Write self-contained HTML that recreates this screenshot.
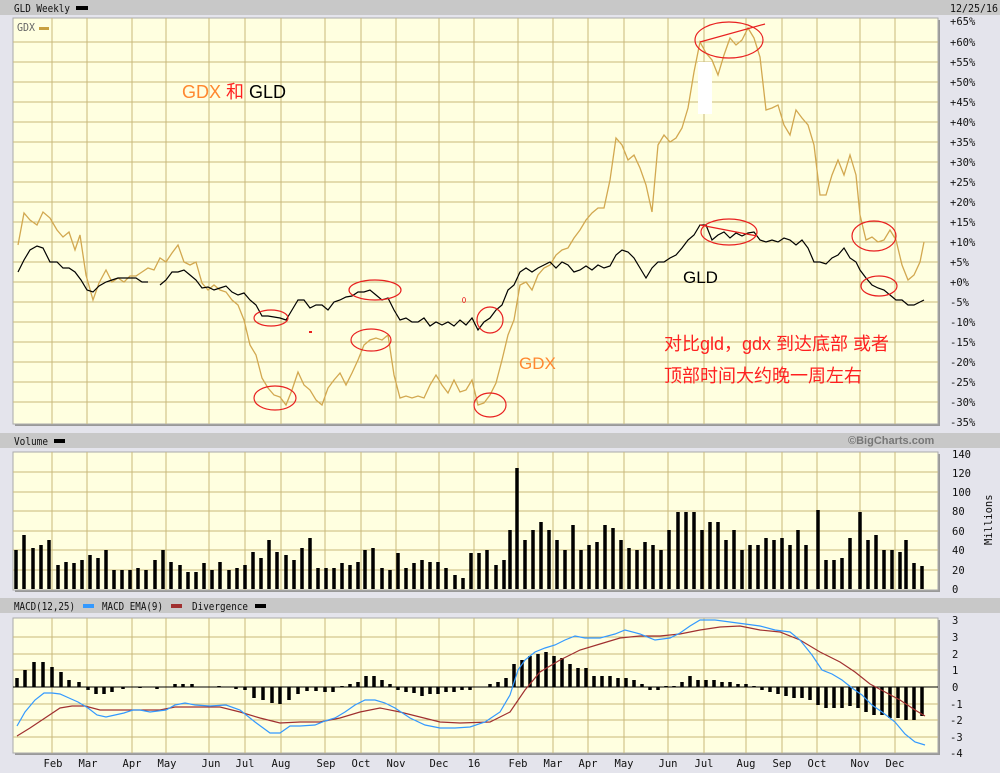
<!DOCTYPE html>
<html><head><meta charset="utf-8"><style>
html,body{margin:0;padding:0;background:#e4e4ec;}
svg{display:block}
.t{font-family:"DejaVu Sans Mono","Liberation Mono",monospace;font-size:10.5px;fill:#111}
.c{font-family:"Liberation Sans","Noto Sans CJK SC",sans-serif;font-size:17px}
</style></head><body>
<svg width="1000" height="773" viewBox="0 0 1000 773" xmlns="http://www.w3.org/2000/svg">
<rect width="1000" height="773" fill="#e4e4ec"/>
<rect x="0" y="0" width="1000" height="15" fill="#c8c8c8"/>
<rect x="0" y="433" width="1000" height="15" fill="#c8c8c8"/>
<rect x="0" y="598" width="1000" height="15" fill="#c8c8c8"/>
<text class="t" x="14" y="12" textLength="56" lengthAdjust="spacingAndGlyphs">GLD Weekly</text><rect x="76" y="6" width="12" height="4" fill="#000"/>
<text class="t" x="950" y="12" textLength="48" lengthAdjust="spacingAndGlyphs">12/25/16</text>
<text class="t" x="14" y="445" textLength="34" lengthAdjust="spacingAndGlyphs">Volume</text><rect x="54" y="439" width="11" height="4" fill="#000"/>
<text x="848" y="444" style="font-family:'Liberation Sans',sans-serif;font-size:11px;font-weight:bold;fill:#777">©BigCharts.com</text>
<text class="t" x="14" y="610" textLength="61" lengthAdjust="spacingAndGlyphs">MACD(12,25)</text><rect x="83" y="604" width="11" height="4" fill="#3399ff"/>
<text class="t" x="102" y="610" textLength="61" lengthAdjust="spacingAndGlyphs">MACD EMA(9)</text><rect x="171" y="604" width="11" height="4" fill="#a03030"/>
<text class="t" x="192" y="610" textLength="56" lengthAdjust="spacingAndGlyphs">Divergence</text><rect x="255" y="604" width="11" height="4" fill="#000"/>
<rect x="15" y="20" width="925" height="406" fill="#999"/>
<rect x="13" y="18" width="925" height="406" fill="#ffffe0" stroke="#aaa"/>
<rect x="15" y="454" width="925" height="138" fill="#999"/>
<rect x="13" y="452" width="925" height="138" fill="#ffffe0" stroke="#aaa"/>
<rect x="15" y="620" width="925" height="135" fill="#999"/>
<rect x="13" y="618" width="925" height="135" fill="#ffffe0" stroke="#aaa"/>
<g stroke="#c9b97a" stroke-width="1">
<path d="M13 42H938M13 62H938M13 82H938M13 102H938M13 122H938M13 142H938M13 162H938M13 182H938M13 202H938M13 222H938M13 242H938M13 262H938M13 282H938M13 302H938M13 322H938M13 342H938M13 362H938M13 382H938M13 402H938"/>
<path d="M13 472H938M13 492H938M13 511H938M13 531H938M13 550H938M13 570H938"/>
<path d="M13 637H938M13 654H938M13 670H938M13 687H938M13 704H938M13 720H938M13 737H938"/>
<path d="M52 18V424M87 18V424M132 18V424M166 18V424M209 18V424M245 18V424M281 18V424M325 18V424M361 18V424M396 18V424M439 18V424M474 18V424M518 18V424M553 18V424M588 18V424M624 18V424M668 18V424M704 18V424M746 18V424M782 18V424M817 18V424M860 18V424M895 18V424"/>
<path d="M52 452V590M87 452V590M132 452V590M166 452V590M209 452V590M245 452V590M281 452V590M325 452V590M361 452V590M396 452V590M439 452V590M474 452V590M518 452V590M553 452V590M588 452V590M624 452V590M668 452V590M704 452V590M746 452V590M782 452V590M817 452V590M860 452V590M895 452V590"/>
<path d="M52 618V753M87 618V753M132 618V753M166 618V753M209 618V753M245 618V753M281 618V753M325 618V753M361 618V753M396 618V753M439 618V753M474 618V753M518 618V753M553 618V753M588 618V753M624 618V753M668 618V753M704 618V753M746 618V753M782 618V753M817 618V753M860 618V753M895 618V753"/>
</g>
<text class="t" x="17" y="31" style="fill:#666" textLength="18" lengthAdjust="spacingAndGlyphs">GDX</text><rect x="39" y="27" width="10" height="3" fill="#c8a040"/>
<g class="t" style="font-size:10.5px">
<text x="950" y="25">+65%</text><text x="950" y="46">+60%</text><text x="950" y="66">+55%</text><text x="950" y="86">+50%</text><text x="950" y="106">+45%</text><text x="950" y="126">+40%</text><text x="950" y="146">+35%</text><text x="950" y="166">+30%</text><text x="950" y="186">+25%</text><text x="950" y="206">+20%</text><text x="950" y="226">+15%</text><text x="950" y="246">+10%</text><text x="950" y="266">+5%</text><text x="950" y="286">+0%</text><text x="950" y="306">-5%</text><text x="950" y="326">-10%</text><text x="950" y="346">-15%</text><text x="950" y="366">-20%</text><text x="950" y="386">-25%</text><text x="950" y="406">-30%</text><text x="950" y="426">-35%</text>
<text x="952" y="458">140</text><text x="952" y="477">120</text><text x="952" y="496">100</text><text x="952" y="515">80</text><text x="952" y="535">60</text><text x="952" y="554">40</text><text x="952" y="574">20</text><text x="952" y="593">0</text>
<text x="952" y="624">3</text><text x="952" y="641">3</text><text x="952" y="658">2</text><text x="952" y="674">1</text><text x="952" y="691">0</text><text x="950" y="708">-1</text><text x="950" y="724">-2</text><text x="950" y="741">-3</text><text x="950" y="757">-4</text>
</g>
<text class="t" transform="translate(992,545) rotate(-90)">Millions</text>
<g class="t" text-anchor="middle" style="font-size:10.5px">
<text x="53" y="767">Feb</text><text x="88" y="767">Mar</text><text x="132" y="767">Apr</text><text x="167" y="767">May</text><text x="211" y="767">Jun</text><text x="245" y="767">Jul</text><text x="281" y="767">Aug</text><text x="326" y="767">Sep</text><text x="361" y="767">Oct</text><text x="396" y="767">Nov</text><text x="439" y="767">Dec</text><text x="474" y="767">16</text><text x="518" y="767">Feb</text><text x="553" y="767">Mar</text><text x="588" y="767">Apr</text><text x="624" y="767">May</text><text x="668" y="767">Jun</text><text x="704" y="767">Jul</text><text x="746" y="767">Aug</text><text x="782" y="767">Sep</text><text x="817" y="767">Oct</text><text x="860" y="767">Nov</text><text x="895" y="767">Dec</text>
</g>
<polyline fill="none" stroke="#d2a850" stroke-width="1.3" points="18,245 24,213 30,220 37,225 43,212 50,218 57,230 63,237 69,232 75,250 80,235 86,275 93,300 99,283 106,270 112,282 118,278 124,282 130,276 136,276 142,272 148,268 154,270 160,258 166,262 172,253 178,245 184,262 190,265 196,262 202,283 208,290 214,285 220,290 226,292 232,300 238,305 244,320 250,345 256,355 262,378 268,388 274,395 280,397 286,405 292,390 298,372 304,385 310,390 316,400 322,405 328,388 334,380 340,373 346,385 352,373 358,360 364,345 370,340 376,338 382,340 388,335 394,375 400,398 406,396 412,398 418,396 424,398 430,385 436,375 442,385 448,393 454,380 460,392 466,390 472,380 478,405 484,403 490,395 496,383 502,360 508,335 514,320 520,285 526,282 532,290 538,275 544,268 550,265 556,255 562,250 568,248 574,238 580,230 586,220 592,213 598,208 604,208 610,180 616,138 622,145 628,160 634,155 640,168 646,185 652,212 658,145 664,135 670,142 676,138 682,128 688,108 694,72 700,42 706,53 712,60 718,75 724,55 730,38 736,45 742,40 748,28 754,38 760,57 766,110 772,108 778,105 784,125 790,135 796,110 802,118 808,125 814,145 820,195 826,195 832,175 838,160 844,175 850,155 856,175 860,215 866,240 872,237 878,242 884,240 890,230 896,240 902,265 908,280 914,275 920,262 924,242"/>
<polyline fill="none" stroke="#000" stroke-width="1.2" points="18,272 24,260 30,250 37,246 43,248 50,262 57,262 63,268 69,268 75,272 81,280 87,290 93,292 99,286 106,282 112,280 118,278 124,278 130,278 136,278 142,282 148,282"/>
<polyline fill="none" stroke="#000" stroke-width="1.2" points="160,285 166,280 172,272 178,272 184,270 190,275 196,280 202,288 208,287 214,290 220,288 226,286 232,292 238,295 244,293 250,300 256,305 262,316 268,316 274,317 280,318 286,320 292,310 298,300 304,300 310,308 316,305 322,305 328,310 334,302 340,300 346,297 352,296 358,292 364,292 370,290 376,295 382,300 388,298 394,310 400,320 406,318 412,322 418,322 424,318 430,326 436,322 442,325 448,322 454,326 460,320 466,325 472,318 478,330 484,322 490,318 496,310 502,305 508,290 514,285 520,272 526,268 532,272 538,268 544,265 550,262 556,268 562,262 568,265 574,272 580,270 586,266 592,270 598,265 604,268 610,266 616,255 622,250 628,252 634,258 640,268 646,278 652,268 658,262 664,262 670,258 676,255 682,248 688,240 694,235 700,225 706,225 712,240 718,235 724,232 730,238 736,233 742,236 748,233 754,232 760,240 766,242 772,240 778,242 784,238 790,240 796,245 802,240 808,248 814,262 820,262 826,264 832,258 838,255 844,248 850,258 856,262 860,270 866,278 872,285 878,288 884,290 890,295 896,300 902,300 908,305 914,305 920,302 924,300"/>
<rect x="698" y="62" width="14" height="52" fill="#fff"/>
<g fill="none" stroke="#e82020" stroke-width="1.2">
<ellipse cx="271" cy="318" rx="17" ry="8"/><ellipse cx="375" cy="290" rx="26" ry="10"/>
<ellipse cx="275" cy="398" rx="21" ry="12"/><ellipse cx="371" cy="340" rx="20" ry="11"/>
<ellipse cx="490" cy="320" rx="13" ry="13"/><ellipse cx="490" cy="405" rx="16" ry="12"/>
<ellipse cx="729" cy="40" rx="34" ry="18"/><ellipse cx="729" cy="232" rx="28" ry="13"/>
<ellipse cx="874" cy="236" rx="22" ry="15"/><ellipse cx="879" cy="286" rx="18" ry="10"/>
<path d="M700 42L765 24M700 225L757 236"/>
</g>
<rect x="309" y="331" width="3" height="2" fill="#e82020"/><ellipse cx="464" cy="300" rx="1.5" ry="2.5" fill="none" stroke="#e82020" stroke-width=".8"/>
<text class="c" x="182" y="98" style="font-size:18px"><tspan fill="#ff8830">GDX </tspan><tspan fill="#ff2020">和 </tspan><tspan fill="#000">GLD</tspan></text>
<text class="c" x="683" y="283" fill="#000">GLD</text>
<text class="c" x="519" y="369" fill="#ff8830">GDX</text>
<text class="c" x="664" y="350" fill="#ff2020" style="font-size:18px">对比gld，gdx 到达底部 或者</text>
<text class="c" x="664" y="382" fill="#ff2020" style="font-size:18px">顶部时间大约晚一周左右</text>
<path stroke="#000" stroke-width="3.5" fill="none" d="M16 589V550M24 589V535M33 589V548M41 589V545M49 589V540M58 589V565M66 589V562M74 589V563M82 589V560M90 589V555M98 589V558M106 589V550M114 589V570M122 589V570M130 589V570M138 589V568M146 589V570M155 589V560M163 589V550M171 589V562M180 589V565M188 589V572M196 589V572M204 589V563M212 589V570M220 589V562M229 589V570M237 589V568M245 589V565M253 589V552M261 589V558M269 589V540M277 589V552M286 589V555M294 589V560M302 589V548M310 589V538M318 589V568M326 589V568M334 589V568M342 589V563M350 589V565M358 589V562M365 589V550M373 589V548M382 589V568M390 589V570M398 589V553M406 589V568M414 589V563M422 589V560M430 589V562M438 589V562M446 589V568M455 589V575M463 589V578M471 589V553M479 589V553M487 589V550M496 589V565M504 589V560M510 589V530M517 589V468M525 589V540M533 589V530M541 589V522M549 589V530M557 589V540M565 589V550M573 589V525M581 589V550M589 589V545M597 589V542M605 589V525M613 589V528M621 589V540M629 589V548M637 589V550M645 589V542M653 589V545M661 589V550M669 589V530M678 589V512M686 589V512M694 589V512M702 589V530M710 589V522M718 589V522M726 589V540M734 589V530M742 589V550M750 589V545M758 589V545M766 589V538M774 589V540M782 589V538M790 589V545M798 589V530M806 589V545M818 589V510M826 589V560M834 589V560M842 589V558M850 589V538M860 589V512M868 589V540M876 589V535M884 589V550M892 589V550M900 589V552M906 589V540M914 589V563M922 589V566"/>
<path stroke="#000" stroke-width="3.5" fill="none" d="M17 687V678M25 687V670M34 687V662M43 687V662M52 687V667M61 687V672M69 687V680M79 687V682M88 687V690M96 687V694M104 687V694M112 687V692M123 687V689M140 687V688M157 687V689M175 687V684M183 687V684M192 687V684M219 687V686M236 687V689M245 687V690M254 687V698M263 687V700M272 687V703M280 687V704M289 687V700M298 687V694M307 687V691M316 687V691M325 687V692M333 687V692M342 687V686M350 687V684M358 687V682M366 687V676M374 687V676M382 687V680M390 687V684M398 687V690M406 687V692M414 687V693M422 687V696M430 687V694M438 687V694M446 687V692M454 687V692M462 687V690M470 687V690M490 687V684M498 687V682M506 687V678M514 687V664M522 687V660M530 687V656M538 687V654M546 687V652M554 687V656M562 687V658M570 687V664M578 687V668M586 687V668M594 687V676M602 687V676M610 687V676M618 687V678M626 687V678M634 687V680M642 687V684M650 687V690M658 687V690M666 687V686M674 687V686M682 687V682M690 687V676M698 687V680M706 687V680M714 687V680M722 687V682M730 687V682M738 687V684M746 687V684M754 687V686M762 687V690M770 687V692M778 687V694M786 687V696M794 687V698M802 687V698M810 687V700M818 687V705M826 687V708M834 687V708M842 687V708M850 687V706M858 687V708M866 687V712M874 687V715M882 687V715M890 687V718M898 687V718M906 687V720M914 687V720M922 687V716"/>
<path stroke="#000" d="M13 687H938"/>
<polyline fill="none" stroke="#a03030" stroke-width="1.2" points="17,736 30,728 45,718 60,708 72,706 85,706 100,710 115,710 140,710 160,710 175,707 200,707 220,707 240,712 260,718 280,723 300,722 320,722 340,718 360,712 380,708 400,712 420,717 440,722 460,723 490,722 510,712 525,690 540,672 560,660 580,650 600,644 620,638 640,636 660,636 680,634 700,630 720,627 740,626 760,630 780,632 800,640 820,652 840,662 855,672 870,684 885,692 900,700 915,710 925,716"/>
<polyline fill="none" stroke="#3399ff" stroke-width="1.2" points="17,726 25,712 35,700 44,693 52,693 60,694 69,698 78,702 88,708 97,715 106,717 115,715 124,713 133,710 140,710 150,712 166,710 175,705 185,703 195,705 210,706 226,705 240,710 255,722 270,733 280,733 290,726 300,726 315,725 325,721 335,718 345,712 355,705 365,700 375,700 385,703 395,708 410,718 425,725 440,728 455,728 470,727 485,722 500,712 510,695 518,670 525,660 535,652 545,648 555,645 565,640 575,636 585,638 600,638 615,634 625,630 640,634 655,640 670,638 680,633 690,626 700,620 715,620 730,622 745,624 760,626 775,630 790,632 800,640 812,655 822,670 832,674 842,680 852,688 862,695 872,705 882,712 895,722 905,734 915,742 925,745"/>
</svg>
</body></html>
